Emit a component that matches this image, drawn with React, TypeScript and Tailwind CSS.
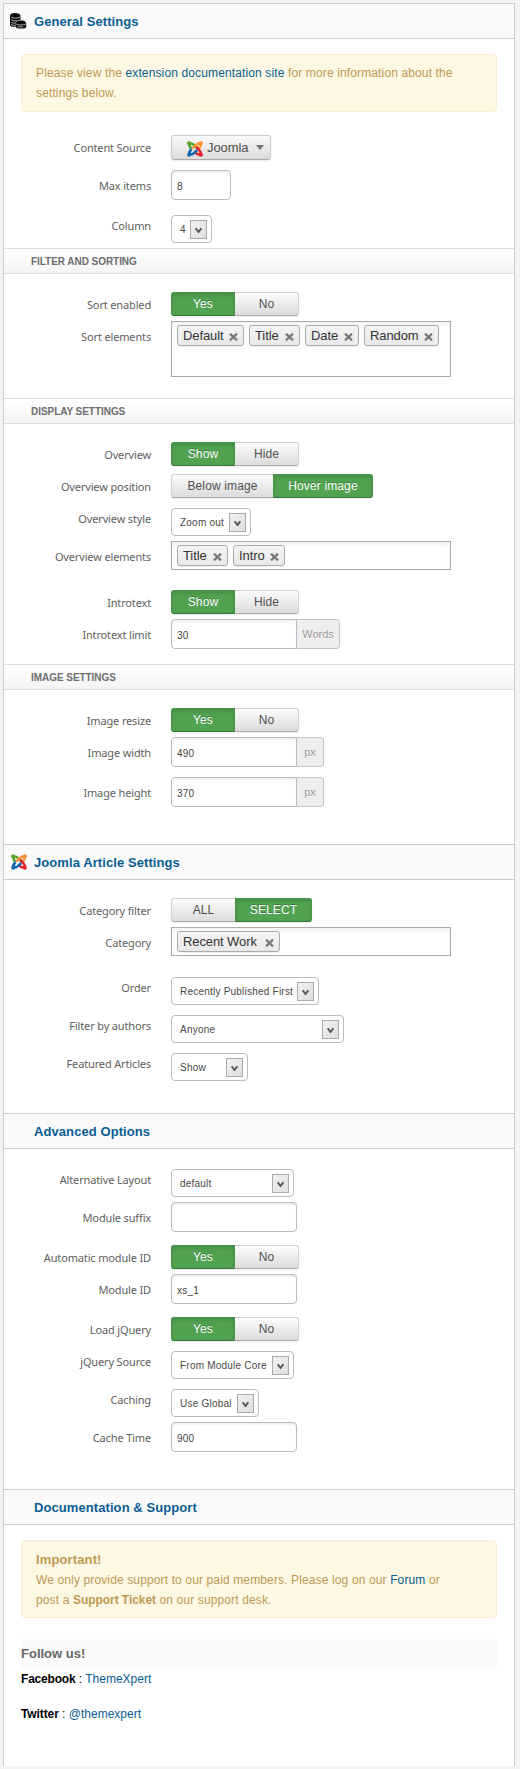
import React from "react";

type Kids = { children?: React.ReactNode };

function JoomlaIcon({ className = "" }: { className?: string }) {
  return (
    <svg className={className} width="16" height="16" viewBox="0 0 16 16" fill="none" strokeWidth="2.6">
      <path d="M2.2 2.6C5 1.900 6.200 3.200 7.400 4.400L10.600 7.600" stroke="#5aa12b" />
      <path d="M2.400 2.800C1.900 5 2.800 6.200 4.600 7.800" stroke="#5aa12b" />
      <path d="M13.600 2.500C11 1.900 9.800 3.200 8.600 4.400L5.400 7.600" stroke="#f9943b" />
      <path d="M13.600 2.600C14.200 5 13.200 6.200 11.600 7.800" stroke="#f9943b" />
      <path d="M13.700 13.500C14.200 11 13.200 9.900 11.900 8.600L9.200 5.900" stroke="#e8222a" />
      <path d="M13.600 13.500C11.200 14 10 13.200 8.400 11.600" stroke="#e8222a" />
      <path d="M2.300 13.500C4.900 14 6.200 13 7.500 11.700L10.200 9" stroke="#1268ac" />
      <path d="M2.400 13.400C1.900 11 2.800 9.800 4.500 8.200" stroke="#1268ac" />
      <circle cx="2.100" cy="2.200" r="2" fill="#5aa12b" />
      <circle cx="13.900" cy="2.200" r="2" fill="#f9943b" />
      <circle cx="13.900" cy="13.700" r="2" fill="#e8222a" />
      <circle cx="2.100" cy="13.700" r="2" fill="#1268ac" />
    </svg>
  );
}

function DatabaseIcon() {
  return (
    <svg width="17" height="16" viewBox="0 0 17 16">
      <path d="M0 2.4C0 .9 2 0 5 0s5.400.9 5.400 2.400V7H8.200L5.600 9v5C2.500 14 0 13 0 12Z" fill="#0a0a0a" />
      <path d="M1 4.200c2 1.300 7 1.300 9 0M1 6.700c2 1.200 5 1.300 7 .9M1 9.200c1.500.8 3 1 4.200 1M1 11.500c1.500.8 3 1 4.200 1" stroke="#bbb" strokeWidth=".9" fill="none" />
      <path d="M5.800 10.200C6.600 8 7.600 7.500 11 7.500s4.400.5 5.200 2.700V14c0 1-2 1.500-5 1.500s-5.400-.5-5.400-1.500Z" fill="#0a0a0a" />
      <path d="M6.400 11.200c2 1 7.300 1 9.400 0M7.500 13.800h5.500" stroke="#ccc" strokeWidth=".8" fill="none" />
    </svg>
  );
}

function Header({ icon, className = "", children }: Kids & { icon?: React.ReactNode; className?: string }) {
  return (
    <h2 className={`flex h-9 items-center border-y border-[#ccc] bg-[#fafafa] text-[13px] font-bold tracking-[0.08px] text-[#095d94] ${className}`}>
      <span className="flex w-[30px] justify-start pl-[6px]">{icon}</span>
      <span className="pt-px">{children}</span>
    </h2>
  );
}

function SubHeader({ className = "", children }: Kids & { className?: string }) {
  return (
    <h3 className={`flex h-[26px] items-center border-y border-[#dcdcdc] bg-linear-to-b from-white to-[#f4f4f4] pt-px pl-[27px] text-[10px] font-bold tracking-[-0.05px] text-[#6e6e6e] ${className}`}>
      {children}
    </h3>
  );
}

function Row({ label, className, children }: Kids & { label: string; className: string }) {
  return (
    <div className={`flex items-start ${className}`}>
      <div className="mr-5 w-[147px] text-right font-['Noto_Sans',sans-serif] text-[11px] leading-5 tracking-[-0.15px] text-[#606060]">{label}</div>
      {children}
    </div>
  );
}

const ROW_BUTTON = "[&>div:first-child]:pt-[3px]";
const ROW_INPUT = "[&>div:first-child]:pt-[6px]";
const ROW_SELECT = "[&>div:first-child]:pt-px";

function Toggle({ options, active, widths }: { options: [string, string]; active: 0 | 1; widths: [string, string] }) {
  return (
    <div className="flex h-6 rounded-[3px] text-[12px] tracking-[0.13px] shadow-[0_1px_2px_rgba(0,0,0,0.08)]">
      {options.map((o, i) => (
        <span
          key={o}
          className={`flex items-center justify-center border ${i === 0 ? "rounded-l-[3px]" : "rounded-r-[3px]"} ${widths[i]} ${
            i === active
              ? "border-[#46934a] border-b-[#327536] bg-[#51a351] text-white shadow-[inset_0_2px_4px_rgba(0,0,0,0.15)] [text-shadow:0_-1px_0_rgba(0,0,0,0.25)]"
              : `border-[#d2d2d2] border-b-[#ababab] bg-linear-to-b from-[#fcfcfc] to-[#dcdcdc] text-[#505050] ${i === 0 ? "border-r-0" : "border-l-0"}`
          }`}
        >
          {o}
        </span>
      ))}
    </div>
  );
}

function YesNo({ labels = ["Yes", "No"] }: { labels?: [string, string] }) {
  return <Toggle options={labels} active={0} widths={["w-16", "w-16"]} />;
}

function TextBox({ value = "", width = "w-[126px]", addon, addonWidth = "" }: { value?: string; width?: string; addon?: string; addonWidth?: string }) {
  return (
    <div className="flex h-[30px]">
      <div
        className={`flex items-center border border-[#bbb] bg-white pt-[2px] pl-[5px] text-[10px] tracking-[0.25px] text-[#444] shadow-[inset_0_2px_2px_rgba(0,0,0,0.06)] ${width} ${
          addon ? "rounded-l-[4px]" : "rounded-[4px]"
        }`}
      >
        {value}
      </div>
      {addon && (
        <div className={`flex items-center justify-center rounded-r-[4px] border border-l-0 border-[#c4c4c4] bg-[#eee] text-[11px] text-[#999] [text-shadow:0_1px_0_#fff] ${addonWidth}`}>
          {addon}
        </div>
      )}
    </div>
  );
}

function SelectBox({ value, width }: { value: string; width: string }) {
  return (
    <div className={`flex h-7 items-center justify-between rounded-[4px] border border-[#bbb] bg-white pr-1 pl-2 text-[10px] tracking-[0.22px] text-[#484848] ${width}`}>
      <span className="whitespace-nowrap">{value}</span>
      <span className="mt-px flex h-[19px] w-[17px] items-center justify-center border border-[#aaa] bg-linear-to-br from-[#f2f2f2] to-[#dedede]">
        <svg width="7" height="7" viewBox="0 0 7 7" className="mt-px">
          <path d="M.7 1.300 3.500 5 6.300 1.300" stroke="#555" strokeWidth="1.900" fill="none" />
        </svg>
      </span>
    </div>
  );
}

function Tags({ items, height }: { items: [string, string][]; height: string }) {
  return (
    <div className={`flex w-[280px] items-start gap-[5px] border border-[#aaa] bg-white pt-[3px] pl-[5px] shadow-[inset_0_3px_4px_rgba(0,0,0,0.06)] ${height}`}>
      {items.map(([t, w]) => (
        <span
          key={t}
          className={`flex h-[21px] items-center justify-between rounded-[3px] border border-[#aaa] bg-linear-to-b from-[#f4f4f4] to-[#e9e9e9] pr-[5px] pl-[5px] text-[13px] tracking-[-0.1px] text-[#333] shadow-[0_1px_0_rgba(0,0,0,0.05)] ${w}`}
        >
          <span className="whitespace-nowrap">{t}</span>
          <svg width="9" height="8" viewBox="0 0 9 8" className="mt-[2px]">
            <path d="M1 .6 8 7.400M8 .6 1 7.400" stroke="#777" strokeWidth="2.200" />
          </svg>
        </span>
      ))}
    </div>
  );
}

function Alert({ className = "", children }: Kids & { className?: string }) {
  return (
    <div className={`mx-[17px] rounded-[4px] border border-[#fbeed5] bg-[#fcf8e3] px-[14px] text-[12px] leading-5 tracking-[0.13px] text-[#c09853] ${className}`}>
      {children}
    </div>
  );
}

function Link({ children }: Kids) {
  return <a className="text-[#095d94]">{children}</a>;
}

export default function App() {
  return (
    <main className="h-[1769px] w-[520px] bg-[#f3f3f3] pt-[3px] pl-[3px] font-['Liberation_Sans',Arial,sans-serif]">
      <div className="flex h-[1763px] w-[512px] flex-col border-x border-[#ccc] bg-white">
        <Header icon={<DatabaseIcon />}>General Settings</Header>
        <Alert className="mt-[15px] h-[58px] pt-2">
          Please view the <Link>extension documentation site</Link> for more information about the settings below.
        </Alert>

        <Row label="Content Source" className={`mt-[23px] h-[25px] ${ROW_BUTTON}`}>
          <div className="flex h-[25px] w-[100px] items-center rounded-[3px] border border-[#ccc] border-b-[#aaa] bg-linear-to-b from-[#fafafa] to-[#dcdcdc] pl-[15px] text-[13px] text-[#505050] shadow-[0_1px_2px_rgba(0,0,0,0.1)]">
            <JoomlaIcon className="mt-[3px] mr-1" />
            <span className="w-[41px] pt-px tracking-[-0.1px]">Joomla</span>
            <span className="ml-2 border-x-[4px] border-t-[5px] border-x-transparent border-t-[#777]" />
          </div>
        </Row>
        <Row label="Max items" className={`mt-[10px] h-[30px] ${ROW_INPUT}`}>
          <TextBox value="8" width="w-[60px]" />
        </Row>
        <Row label="Column" className={`mt-[15px] h-7 ${ROW_SELECT}`}>
          <SelectBox value="4" width="w-[41px]" />
        </Row>

        <SubHeader className="mt-[5px]">FILTER AND SORTING</SubHeader>
        <Row label="Sort enabled" className={`mt-[18px] h-6 ${ROW_BUTTON}`}>
          <YesNo />
        </Row>
        <Row label="Sort elements" className={`mt-[5px] h-14 ${ROW_INPUT}`}>
          <Tags
            height="h-14"
            items={[
              ["Default", "w-[67px]"],
              ["Title", "w-[51px]"],
              ["Date", "w-[54px]"],
              ["Random", "w-[75px]"],
            ]}
          />
        </Row>

        <SubHeader className="mt-[21px]">DISPLAY SETTINGS</SubHeader>
        <Row label="Overview" className={`mt-[18px] h-6 ${ROW_BUTTON}`}>
          <YesNo labels={["Show", "Hide"]} />
        </Row>
        <Row label="Overview position" className={`mt-2 h-6 ${ROW_BUTTON}`}>
          <Toggle options={["Below image", "Hover image"]} active={1} widths={["w-[102px]", "w-[100px]"]} />
        </Row>
        <Row label="Overview style" className={`mt-[10px] h-7 ${ROW_SELECT}`}>
          <SelectBox value="Zoom out" width="w-20" />
        </Row>
        <Row label="Overview elements" className={`mt-[5px] h-[29px] ${ROW_INPUT}`}>
          <Tags
            height="h-[29px]"
            items={[
              ["Title", "w-[51px]"],
              ["Intro", "w-[52px]"],
            ]}
          />
        </Row>
        <Row label="Introtext" className={`mt-5 h-6 ${ROW_BUTTON}`}>
          <YesNo labels={["Show", "Hide"]} />
        </Row>
        <Row label="Introtext limit" className={`mt-[5px] h-[30px] ${ROW_INPUT}`}>
          <TextBox value="30" addon="Words" addonWidth="w-[43px]" />
        </Row>

        <SubHeader className="mt-[15px]">IMAGE SETTINGS</SubHeader>
        <Row label="Image resize" className={`mt-[18px] h-6 ${ROW_BUTTON}`}>
          <YesNo />
        </Row>
        <Row label="Image width" className={`mt-[5px] h-[30px] ${ROW_INPUT}`}>
          <TextBox value="490" addon="px" addonWidth="w-[27px]" />
        </Row>
        <Row label="Image height" className={`mt-[10px] h-[30px] ${ROW_INPUT}`}>
          <TextBox value="370" addon="px" addonWidth="w-[27px]" />
        </Row>

        <Header className="mt-[37px]" icon={<JoomlaIcon className="ml-px" />}>
          Joomla Article Settings
        </Header>
        <Row label="Category filter" className={`mt-[18px] h-6 ${ROW_BUTTON}`}>
          <Toggle options={["ALL", "SELECT"]} active={1} widths={["w-16", "w-[77px]"]} />
        </Row>
        <Row label="Category" className={`mt-[5px] h-[29px] ${ROW_INPUT}`}>
          <Tags height="h-[29px]" items={[["Recent Work", "w-[103px]"]]} />
        </Row>
        <Row label="Order" className={`mt-[21px] h-7 ${ROW_SELECT}`}>
          <SelectBox value="Recently Published First" width="w-[148px]" />
        </Row>
        <Row label="Filter by authors" className={`mt-[10px] h-7 ${ROW_SELECT}`}>
          <SelectBox value="Anyone" width="w-[173px]" />
        </Row>
        <Row label="Featured Articles" className={`mt-[10px] h-7 ${ROW_SELECT}`}>
          <SelectBox value="Show" width="w-[77px]" />
        </Row>

        <Header className="mt-8">Advanced Options</Header>
        <Row label="Alternative Layout" className={`mt-5 h-7 ${ROW_SELECT}`}>
          <SelectBox value="default" width="w-[123px]" />
        </Row>
        <Row label="Module suffix" className={`mt-[5px] h-[30px] ${ROW_INPUT}`}>
          <TextBox />
        </Row>
        <Row label="Automatic module ID" className={`mt-[13px] h-6 ${ROW_BUTTON}`}>
          <YesNo />
        </Row>
        <Row label="Module ID" className={`mt-[5px] h-[30px] ${ROW_INPUT}`}>
          <TextBox value="xs_1" />
        </Row>
        <Row label="Load jQuery" className={`mt-[13px] h-6 ${ROW_BUTTON}`}>
          <YesNo />
        </Row>
        <Row label="jQuery Source" className={`mt-[10px] h-7 ${ROW_SELECT}`}>
          <SelectBox value="From Module Core" width="w-[123px]" />
        </Row>
        <Row label="Caching" className={`mt-[10px] h-7 ${ROW_SELECT}`}>
          <SelectBox value="Use Global" width="w-[88px]" />
        </Row>
        <Row label="Cache Time" className={`mt-[5px] h-[30px] ${ROW_INPUT}`}>
          <TextBox value="900" />
        </Row>

        <Header className="mt-[37px]">Documentation &amp; Support</Header>
        <Alert className="mt-[15px] h-[78px] pt-[9px]">
          <strong className="block text-[13px]">Important!</strong>
          We only provide support to our paid members. Please log on our <Link>Forum</Link> or
          <br />
          post a <strong className="tracking-[-0.05px]">Support Ticket</strong> on our support desk.
        </Alert>
        <div className="mx-[17px] mt-[21px] h-[30px] bg-[#fafafa] text-[13px] leading-[30px] font-bold text-[#666]">Follow us!</div>
        <p className="mx-[17px] text-[12px] leading-5 text-black">
          <strong className="tracking-[-0.2px]">Facebook</strong> : <Link>ThemeXpert</Link>
        </p>
        <p className="mx-[17px] mt-[15px] text-[12px] leading-5 text-black">
          <strong className="tracking-[-0.1px]">Twitter</strong> : <Link>@themexpert</Link>
        </p>
      </div>
    </main>
  );
}
